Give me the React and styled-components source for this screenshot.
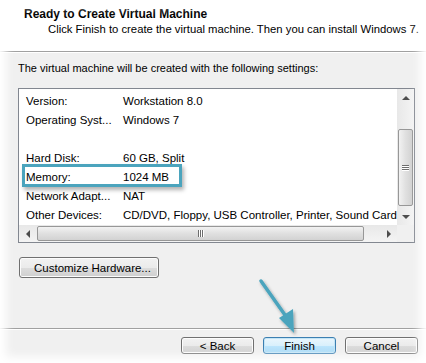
import styled, { createGlobalStyle } from "styled-components";

const Global = createGlobalStyle`
  html, body { margin: 0; padding: 0; background: #fff; }
`;

const Dialog = styled.div`
  position: relative;
  width: 426px;
  height: 363px;
  overflow: hidden;
  background: #f0f0f0;
  font-family: "Liberation Sans", Arial, sans-serif;
  font-size: 11px;
  color: #000;
  display: flex;
  flex-direction: column;
`;

const Header = styled.div`
  height: 52px;
  flex: none;
  box-sizing: border-box;
  background: #fff;
  padding: 7px 0 0 24px;
  border-bottom: 1px solid #a0a0a0;
  white-space: nowrap;
`;

const Title = styled.div`
  font-weight: bold;
  font-size: 12px;
  line-height: 15px;
`;

const Subtitle = styled.div`
  padding-left: 24px;
  font-size: 11.3px;
  line-height: 15px;
`;

const Body = styled.div`
  flex: 1;
  padding: 8px 11px 0 18px;
  border-top: 1px solid #fff;
  display: flex;
  flex-direction: column;
  border-bottom: 1px solid #a0a0a0;
`;

const Intro = styled.div`
  line-height: 15px;
  margin-bottom: 12px;
`;

const ListBox = styled.div`
  position: relative;
  width: 397px;
  height: 155px;
  box-sizing: border-box;
  border: 1px solid #828790;
  background: #fff;
  display: grid;
  grid-template-columns: 1fr 17px;
  grid-template-rows: 1fr 17px;
`;

const Rows = styled.div`
  padding: 2px 0 0 7px;
  overflow: hidden;
  white-space: nowrap;
  font-size: 11.5px;
`;

const Row = styled.div`
  display: flex;
  height: 19px;
  align-items: center;
`;

const Label = styled.span`
  width: 97px;
  flex: none;
`;

const Highlight = styled.div`
  position: absolute;
  left: 3px;
  top: 75px;
  width: 160px;
  height: 23px;
  box-sizing: border-box;
  border: 3px solid #4ba4bd;
  box-shadow: 2px 3px 4px rgba(0, 0, 0, 0.3);
  pointer-events: none;
`;

const VBar = styled.div`
  background: linear-gradient(to right, #e8e8e8, #f4f4f4);
  display: flex;
  flex-direction: column;
  align-items: center;
  padding: 0 1px;
`;

const HBar = styled.div`
  background: linear-gradient(to bottom, #e8e8e8, #f4f4f4);
  display: flex;
  align-items: center;
  padding: 1px 0;
`;

const Corner = styled.div`
  background: #f0f0f0;
`;

const Arrow = styled.div`
  flex: none;
  width: 17px;
  height: 17px;
  display: flex;
  align-items: center;
  justify-content: center;
`;

const Thumb = styled.div`
  box-sizing: border-box;
  border: 1px solid #979797;
  border-radius: 2px;
  display: flex;
  align-items: center;
  justify-content: center;
  background: ${(p) =>
    p.$vertical
      ? "linear-gradient(to right, #f2f2f2, #e0e0e0 50%, #d2d2d2)"
      : "linear-gradient(to bottom, #f2f2f2, #e0e0e0 50%, #d2d2d2)"};
  ${(p) =>
    p.$vertical
      ? "width: 15px; height: 77px; margin-top: 23px;"
      : "height: 15px; width: 327px; margin-left: 1px;"}
`;

const Grip = styled.div`
  display: flex;
  flex-direction: ${(p) => (p.$vertical ? "column" : "row")};
  gap: 1px;
  & > i {
    display: block;
    background: #6d6d6d;
    ${(p) => (p.$vertical ? "width: 7px; height: 1px;" : "width: 1px; height: 7px;")}
    box-shadow: ${(p) => (p.$vertical ? "0 1px 0 #fff" : "1px 0 0 #fff")};
  }
`;

const Spacer = styled.div`
  flex: 1;
`;

const Button = styled.button`
  box-sizing: border-box;
  font: inherit;
  color: #000;
  white-space: nowrap;
  border: 1px solid ${(p) => (p.$primary ? "#3c7fb1" : "#707070")};
  border-radius: 3px;
  background: ${(p) =>
    p.$primary
      ? "linear-gradient(to bottom, #eaf6fd 0%, #d9f0fc 50%, #bee6fd 51%, #a7d9f5 100%)"
      : "linear-gradient(to bottom, #f2f2f2 0%, #ebebeb 50%, #dddddd 51%, #cfcfcf 100%)"};
  box-shadow: inset 0 0 0 1px ${(p) => (p.$primary ? "#c4e5f6" : "#fcfcfc")};
  padding: 0;
  height: ${(p) => p.$h || 17}px;
  width: ${(p) => p.$w || 73}px;
`;

const CustomizeButton = styled(Button)`
  margin-top: 14px;
  margin-left: 1px;
  align-self: flex-start;
  text-align: left;
  padding-left: 14px;
  font-size: 11.5px;
`;

const Footer = styled.div`
  flex: none;
  box-sizing: border-box;
  border-top: 1px solid #fff;
  height: 34px;
  display: flex;
  justify-content: flex-end;
  align-items: flex-start;
  padding: 7px 8px 0 0;
  gap: 9px;
  font-size: 11.5px;
`;

const Pointer = styled.svg`
  position: absolute;
  left: 250px;
  top: 276px;
  pointer-events: none;
`;

const Vignette = styled.div`
  position: absolute;
  inset: 0;
  pointer-events: none;
  box-shadow: inset 0 0 10px 6px #fff;
`;

const rows = [
  ["Version:", "Workstation 8.0"],
  ["Operating Syst...", "Windows 7"],
  ["", ""],
  ["Hard Disk:", "60 GB, Split"],
  ["Memory:", "1024 MB"],
  ["Network Adapt...", "NAT"],
  ["Other Devices:", "CD/DVD, Floppy, USB Controller, Printer, Sound Card"],
];

const Tri = ({ dir }) => {
  const pts = {
    up: "0,4 4,0 8,4",
    down: "0,0 8,0 4,4",
    left: "4,0 4,8 0,4",
    right: "0,0 4,4 0,8",
  }[dir];
  const vert = dir === "up" || dir === "down";
  return (
    <svg width={vert ? 8 : 4} height={vert ? 4 : 8}>
      <polygon points={pts} fill="#4d4d4d" />
    </svg>
  );
};

export default function App() {
  return (
    <Dialog>
      <Global />
      <Header>
        <Title>Ready to Create Virtual Machine</Title>
        <Subtitle>
          Click Finish to create the virtual machine. Then you can install Windows 7.
        </Subtitle>
      </Header>
      <Body>
        <Intro>The virtual machine will be created with the following settings:</Intro>
        <ListBox>
          <Rows>
            {rows.map(([l, v], i) => (
              <Row key={i}>
                <Label>{l}</Label>
                <span>{v}</span>
              </Row>
            ))}
          </Rows>
          <VBar>
            <Arrow>
              <Tri dir="up" />
            </Arrow>
            <Thumb $vertical>
              <Grip $vertical>
                <i />
                <i />
                <i />
              </Grip>
            </Thumb>
            <Spacer />
            <Arrow>
              <Tri dir="down" />
            </Arrow>
          </VBar>
          <HBar>
            <Arrow>
              <Tri dir="left" />
            </Arrow>
            <Thumb>
              <Grip>
                <i />
                <i />
                <i />
              </Grip>
            </Thumb>
            <Spacer />
            <Arrow>
              <Tri dir="right" />
            </Arrow>
          </HBar>
          <Corner />
          <Highlight />
        </ListBox>
        <CustomizeButton $w={140} $h={21}>
          Customize Hardware...
        </CustomizeButton>
      </Body>
      <Footer>
        <Button>&lt; Back</Button>
        <Button $primary>Finish</Button>
        <Button>Cancel</Button>
      </Footer>
      <Pointer width="60" height="64" viewBox="0 0 60 64">
        <defs>
          <filter id="sh" x="-30%" y="-30%" width="160%" height="160%">
            <feDropShadow dx="1.5" dy="2" stdDeviation="1.5" floodOpacity="0.35" />
          </filter>
        </defs>
        <g filter="url(#sh)">
          <line x1="11" y1="5" x2="35" y2="39" stroke="#4ba4bd" strokeWidth="3.5" strokeLinecap="round" />
          <polygon points="29,42 43,33 44,57" fill="#4ba4bd" />
        </g>
      </Pointer>
      <Vignette />
    </Dialog>
  );
}
